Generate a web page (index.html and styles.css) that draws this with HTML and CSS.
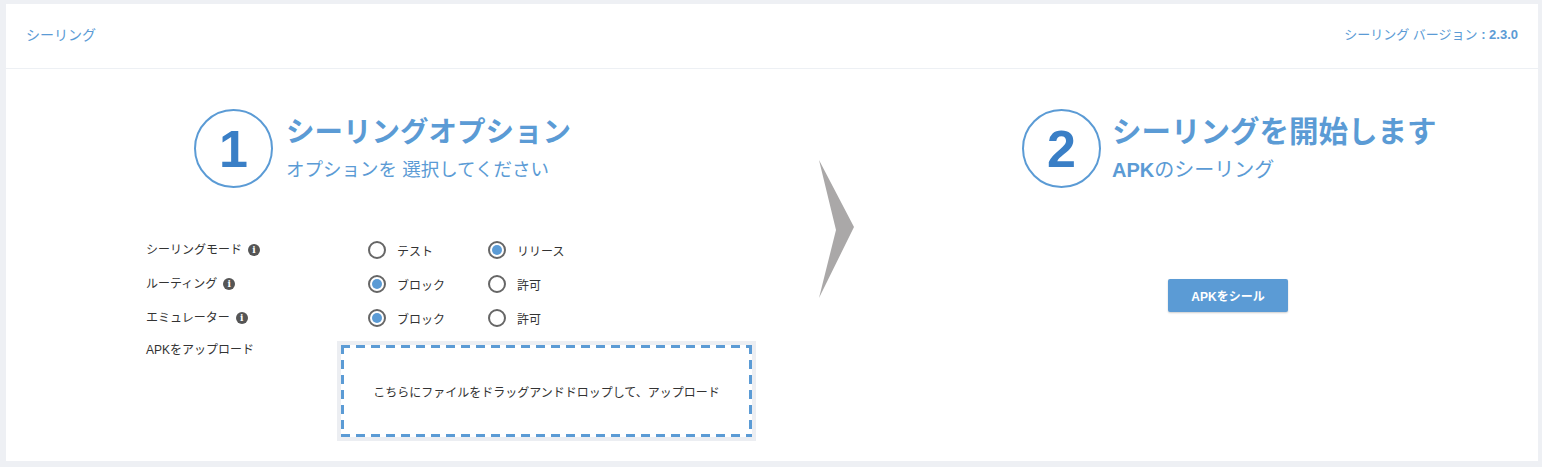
FILE: index.html
```html
<!DOCTYPE html>
<html lang="ja">
<head>
<meta charset="utf-8">
<title>シーリング</title>
<link rel="stylesheet" href="styles.css">
</head>
<body>
<div class="card">
  <header class="card-header">
    <div class="brand">シーリング</div>
    <div class="version">シーリング バージョン <b>: 2.3.0</b></div>
  </header>
  <main class="card-body">
    <section class="col-left">
      <div class="step">
        <div class="step-num">1</div>
        <div class="step-text">
          <div class="step-title">シーリングオプション</div>
          <div class="step-sub">オプションを 選択してください</div>
        </div>
      </div>
      <div class="form">
        <div class="row">
          <div class="label">シーリングモード<span class="info">i</span></div>
          <div class="opt"><span class="radio"></span>テスト</div>
          <div class="opt"><span class="radio checked"></span>リリース</div>
        </div>
        <div class="row">
          <div class="label">ルーティング<span class="info">i</span></div>
          <div class="opt"><span class="radio checked"></span>ブロック</div>
          <div class="opt"><span class="radio"></span>許可</div>
        </div>
        <div class="row">
          <div class="label">エミュレーター<span class="info">i</span></div>
          <div class="opt"><span class="radio checked"></span>ブロック</div>
          <div class="opt"><span class="radio"></span>許可</div>
        </div>
        <div class="row upload-row">
          <div class="label upload-label">APKをアップロード</div>
          <div class="dropzone">
            <div class="dropzone-inner">こちらにファイルをドラッグアンドドロップして、アップロード</div>
          </div>
        </div>
      </div>
    </section>
    <div class="arrow">
      <svg width="37" height="138" viewBox="0 0 37 138"><polygon points="1,0 36,67 1,138 18,70" fill="#aaa8a8"/></svg>
    </div>
    <section class="col-right">
      <div class="step">
        <div class="step-num">2</div>
        <div class="step-text">
          <div class="step-title wide">シーリングを開始します</div>
          <div class="step-sub big"><b class="apk">APK</b>のシーリング</div>
        </div>
      </div>
      <button class="btn">APKをシール</button>
    </section>
  </main>
</div>
</body>
</html>
```
FILE: styles.css
```css
* { box-sizing: border-box; }
html, body { margin: 0; padding: 0; }
body {
  background: #eef0f4;
  font-family: "Liberation Sans", "Noto Sans CJK JP", sans-serif;
  color: #333;
  padding: 4px 4px 6px 6px;
}
.card {
  background: #fff;
  height: 457px;
}
.card-header {
  height: 65px;
  border-bottom: 1px solid #edf0f4;
  display: flex;
  align-items: center;
  justify-content: space-between;
  padding: 0 20px 0 20px;
  color: #5b9bd5;
}
.brand { font-size: 14px; line-height: 20px; margin-top: -2px; }
.version { font-size: 13px; line-height: 20px; margin-top: -2px; }
.version b { font-weight: bold; }

.card-body {
  display: flex;
  align-items: flex-start;
  padding-left: 140px;
}
.col-left { width: 610px; }
.arrow {
  width: 37px;
  margin-left: 62px;
  margin-top: 91px;
  line-height: 0;
}
.col-right { margin-left: 167px; }

.step {
  display: flex;
  align-items: flex-start;
  margin-top: 40px;
  height: 79px;
}
.col-left .step { margin-left: 48px; }
.step-num {
  width: 79px;
  height: 79px;
  border: 2px solid #5b9bd5;
  border-radius: 50%;
  display: flex;
  align-items: center;
  justify-content: center;
  font-family: "Liberation Sans", sans-serif;
  font-weight: bold;
  font-size: 52px;
  color: #3a7fc6;
  flex: none;
}
.step-text {
  margin-left: 13px;
  margin-top: 4px;
  color: #5b9bd5;
}
.col-right .step-text { margin-left: 11px; }
.step-title {
  font-size: 28.5px;
  font-weight: bold;
  line-height: 38px;
  white-space: nowrap;
}
.step-title.wide { font-size: 29.5px; }
.step-sub {
  font-size: 18.5px;
  line-height: 38px;
  white-space: nowrap;
}
.step-sub.big { font-size: 20px; }
.apk { font-weight: bold; font-family: "Liberation Sans", sans-serif; }

.form { margin-top: 45px; font-size: 12px; }
.row {
  display: flex;
  align-items: center;
  height: 34px;
}
.label {
  width: 222px;
  display: flex;
  align-items: center;
  line-height: 34px;
  color: #333;
}
.info {
  width: 12px;
  height: 12px;
  border-radius: 50%;
  background: #555;
  color: #fff;
  font-family: "DejaVu Serif", serif;
  font-weight: bold;
  font-size: 9px;
  line-height: 12px;
  text-align: center;
  margin-left: 6px;
}
.opt {
  width: 120px;
  display: flex;
  align-items: center;
  color: #333;
}
.radio {
  width: 18px;
  height: 18px;
  border: 2px solid #666;
  border-radius: 50%;
  margin-right: 11px;
  display: flex;
  align-items: center;
  justify-content: center;
  flex: none;
}
.radio.checked::after {
  content: "";
  width: 10px;
  height: 10px;
  border-radius: 50%;
  background: #5b9bd5;
}
.upload-row {
  height: auto;
  align-items: flex-start;
  margin-top: 6px;
}
.upload-label {
  width: 191px;
  line-height: 18px;
}
.dropzone {
  width: 419px;
  height: 100px;
  background: #eceef2;
  padding: 4px;
}
.dropzone-inner {
  width: 100%;
  height: 100%;
  background-color: #fff;
  background-image:
    repeating-linear-gradient(90deg, #5b9bd5 0 9px, transparent 9px 15px),
    repeating-linear-gradient(90deg, #5b9bd5 0 9px, transparent 9px 15px),
    repeating-linear-gradient(180deg, #5b9bd5 0 9px, transparent 9px 15px),
    repeating-linear-gradient(180deg, #5b9bd5 0 9px, transparent 9px 15px);
  background-size: 100% 3px, 100% 3px, 3px 100%, 3px 100%;
  background-position: left top, left bottom, left top, right top;
  background-repeat: no-repeat;
  display: flex;
  align-items: center;
  justify-content: center;
  font-size: 12px;
  color: #333;
}
.btn {
  display: block;
  margin-left: 146px;
  margin-top: 91px;
  width: 120px;
  height: 33px;
  border: none;
  border-radius: 2px;
  background: #5b9bd5;
  color: #fff;
  font-family: "Liberation Sans", "Noto Sans CJK JP", sans-serif;
  font-weight: bold;
  font-size: 12px;
  box-shadow: 0 1px 2px rgba(0,0,0,0.2);
  padding: 0;
}
```
